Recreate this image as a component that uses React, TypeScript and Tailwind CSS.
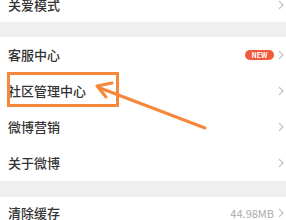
import React from "react";

const Chevron = () => (
  <svg width="6" height="10" viewBox="0 0 6 10" className="shrink-0">
    <path d="M1 1l4 4-4 4" fill="none" stroke="#c4c4c4" strokeWidth="1.2" />
  </svg>
);

function Row({
  label,
  right,
  h = "h-[36px]",
}: {
  label: string;
  right?: React.ReactNode;
  h?: string;
}) {
  return (
    <div className={`flex ${h} items-center justify-between bg-white pl-[8px] pr-[2px]`}>
      <span className="text-[13px] font-medium text-[#333333]">{label}</span>
      <div className="flex items-center gap-[4px]">
        {right}
        <Chevron />
      </div>
    </div>
  );
}

export default function App() {
  return (
    <div
      className="relative h-[220px] w-[286px] overflow-hidden bg-white"
      style={{ fontFamily: '"Noto Sans CJK SC", "Noto Sans", sans-serif' }}
    >
      <div className="-mt-[12px] flex flex-col">
        <Row label="关爱模式" h="h-[34px]" />
        <div className="h-[15px] bg-[#efefef]" />
        <Row
          label="客服中心"
          right={
            <span className="flex h-[10px] w-[29px] items-center justify-center rounded-full bg-[#f0593c] text-[7px] font-bold leading-none text-white">
              NEW
            </span>
          }
        />
        <Row label="社区管理中心" />
        <Row label="微博营销" />
        <Row label="关于微博" />
        <div className="h-[16px] bg-[#efefef]" />
        <Row
          label="清除缓存"
          h="h-[32px]"
          right={<span className="text-[11px] text-[#aaaaaa]">44.98MB</span>}
        />
      </div>

      {/* annotation box */}
      <div className="absolute left-[7px] top-[72px] h-[35px] w-[112px] border-[3px] border-[#f7873a]" />

      {/* annotation arrow */}
      <svg
        className="absolute left-0 top-0"
        width="286"
        height="220"
        viewBox="0 0 286 220"
      >
        <line
          x1="205"
          y1="128"
          x2="100"
          y2="88"
          stroke="#f7873a"
          strokeWidth="3"
          strokeLinecap="round"
        />
        <path
          d="M97 86 L112 83 M97 86 L106 97"
          stroke="#f7873a"
          strokeWidth="3"
          strokeLinecap="round"
          fill="none"
        />
      </svg>
    </div>
  );
}
